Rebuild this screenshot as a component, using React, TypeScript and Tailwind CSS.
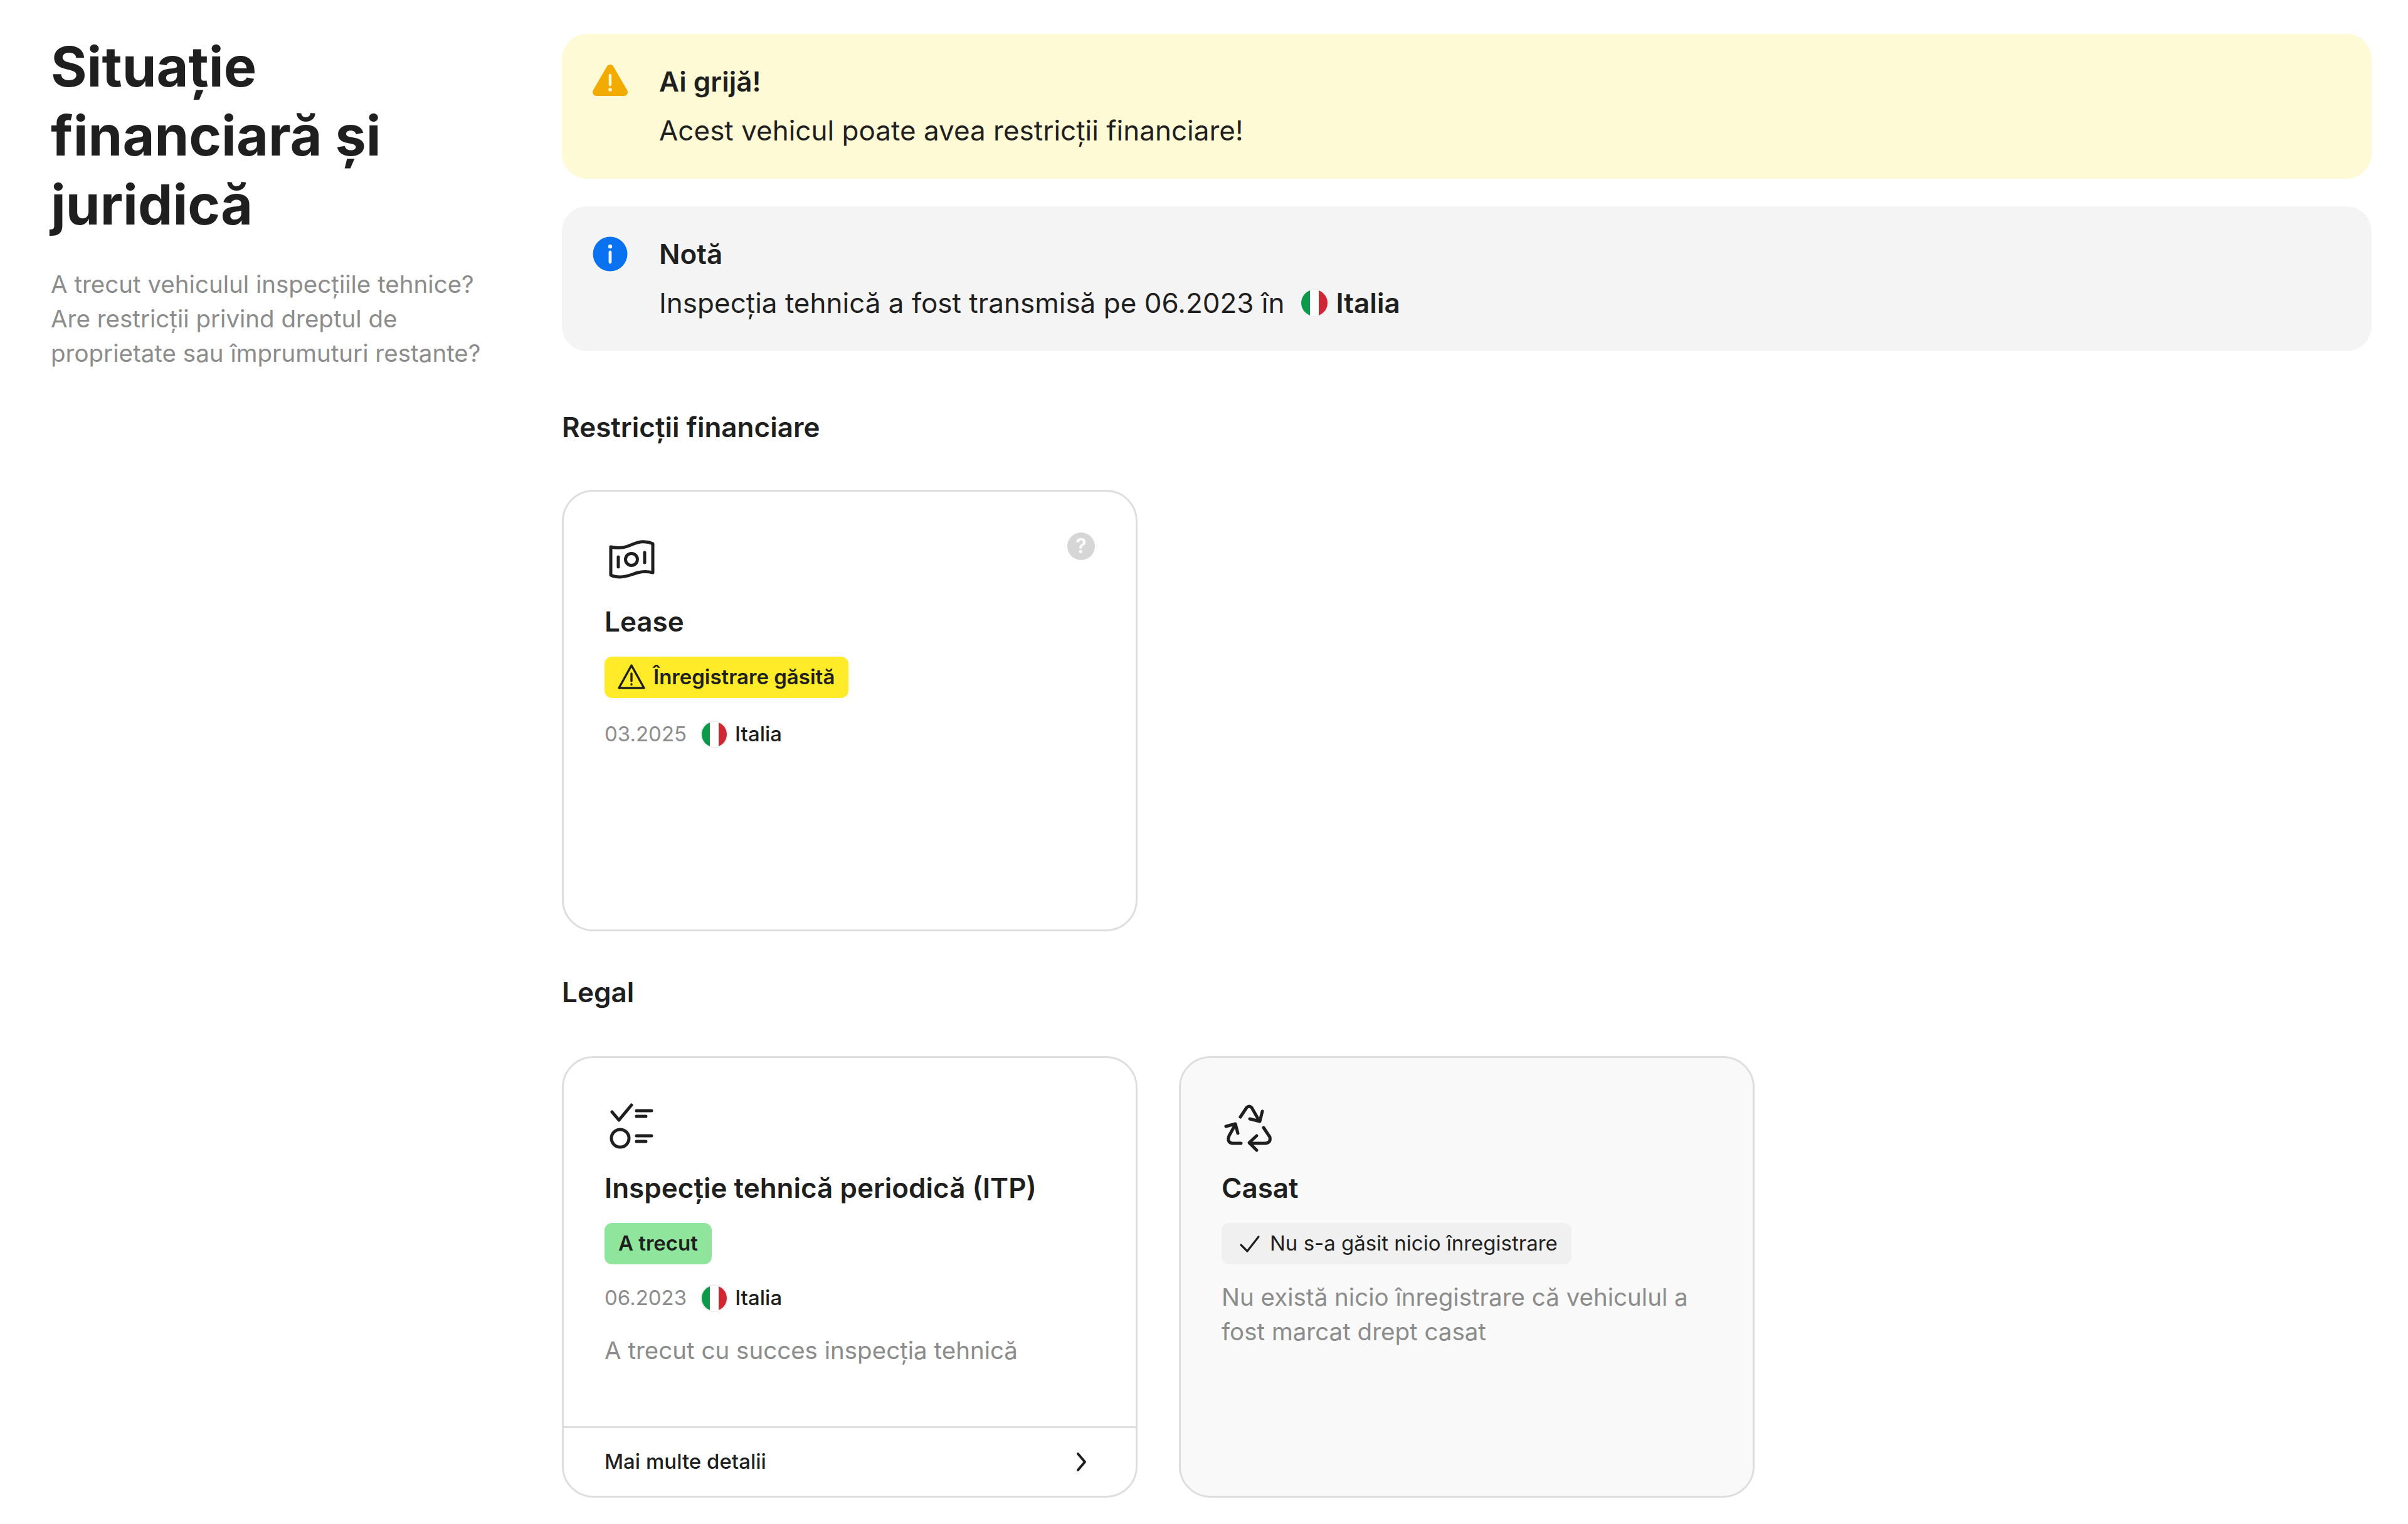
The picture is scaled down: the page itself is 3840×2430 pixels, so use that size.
const ink = "#1f1f1f";

function ItalyFlag({ size = "w-[44px] h-[44px]" }: { size?: string }) {
	return (
		<span className={`${size} rounded-full overflow-hidden flex shrink-0 border-[2px] border-[#efefef]`}>
			<span className="flex-1 bg-[#0b9a4a]" />
			<span className="flex-1 bg-white" />
			<span className="flex-1 bg-[#cf2535]" />
		</span>
	);
}

function WarnSolid() {
	return (
		<svg width="60" height="60" viewBox="0 0 60 60" className="block">
			<path d="M30 9 L52 47 H8 Z" fill="#f2ab00" stroke="#f2ab00" strokeWidth="12" strokeLinejoin="round" />
			<path d="M30 20 V35" stroke="#fffad6" strokeWidth="4.5" strokeLinecap="round" />
			<circle cx="30" cy="43" r="2.8" fill="#fffad6" />
		</svg>
	);
}

function InfoSolid() {
	return (
		<svg width="60" height="60" viewBox="0 0 60 60" className="block">
			<circle cx="30" cy="30" r="27.5" fill="#0a72f0" />
			<circle cx="30" cy="18" r="3.2" fill="#f4f4f4" />
			<path d="M30 27 V43" stroke="#f4f4f4" strokeWidth="4.8" strokeLinecap="round" />
		</svg>
	);
}

function MoneyIcon() {
	return (
		<svg width="88" height="88" viewBox="0 0 88 88" fill="none" stroke={ink} strokeWidth="5" strokeLinecap="round" strokeLinejoin="round" className="block">
			<path d="M11 24 C20 26 30 26 38 23 C48 19 56 15 66 16 C70 16 74 17 78 19 V65 C70 63 62 63 54 65 C44 68 36 72 26 72 C20 72 15 71 11 69 Z" />
			<circle cx="44" cy="44" r="9.5" />
			<path d="M23 40 V56 M65 33 V49" />
		</svg>
	);
}

function ChecklistIcon() {
	return (
		<svg width="88" height="88" viewBox="0 0 88 88" fill="none" stroke={ink} strokeWidth="5" strokeLinecap="round" strokeLinejoin="round" className="block">
			<path d="M13 22 L24 35 L44 11" />
			<path d="M52 20 H76 M52 29 H67" />
			<circle cx="26" cy="64" r="14" />
			<path d="M52 60 H76 M52 69 H67" />
		</svg>
	);
}

function RecycleIcon() {
	return (
		<svg width="88" height="88" viewBox="0 0 88 88" fill="none" stroke={ink} strokeWidth="5" strokeLinecap="round" strokeLinejoin="round" className="block">
			<path d="M31 30 L41 15 Q45 11 49 15 L61 36" />
			<path d="M66 21 L62 37 L46 33" />
			<path d="M32 72 H18 Q9 70 13 60 L23 42" />
			<path d="M8 45 L23 41 L27 56" />
			<path d="M68 47 L78 62 Q80 71 71 72 H46" />
			<path d="M57 60 L45 71 L57 83" />
		</svg>
	);
}

function Alert({
	bg,
	icon,
	title,
	children,
}: {
	bg: string;
	icon: React.ReactNode;
	title: string;
	children: React.ReactNode;
}) {
	return (
		<div className={`${bg} rounded-[40px] h-[231px] pt-[46px] pl-[47px] flex gap-[48px]`}>
			<div className="w-[60px] h-[60px]">{icon}</div>
			<div className="flex flex-col gap-[18px]">
				<div className="text-[44px] leading-[60px] font-semibold text-[#1f1f1f]">{title}</div>
				<div className="text-[44px] leading-[60px] text-[#1f1f1f] flex items-center">{children}</div>
			</div>
		</div>
	);
}

function Card({
	muted,
	icon,
	title,
	help,
	children,
	footer,
}: {
	muted?: boolean;
	icon: React.ReactNode;
	title: string;
	help?: boolean;
	children: React.ReactNode;
	footer?: string;
}) {
	return (
		<div className={`relative h-[704px] rounded-[50px] border-[3px] border-[#dedede] flex flex-col overflow-hidden ${muted ? "bg-[#f9f9f9]" : "bg-white"}`}>
			<div className="flex-1 pt-[64px] px-[65px]">
				<div className="w-[88px] h-[88px] -ml-[1px]">{icon}</div>
				<div className="mt-[25px] text-[44px] leading-[60px] font-semibold text-[#1f1f1f]">{title}</div>
				{children}
			</div>
			{help && (
				<div className="absolute top-[65px] right-[65px] w-[44px] h-[44px] rounded-full bg-[#d6d6d6] flex items-center justify-center text-white text-[32px] font-semibold">
					?
				</div>
			)}
			{footer && (
				<div className="h-[111px] border-t-[3px] border-[#dedede] pl-[65px] pr-[70px] flex items-center justify-between text-[33px] font-medium text-[#1f1f1f]">
					<span>{footer}</span>
					<svg width="34" height="34" viewBox="0 0 34 34" fill="none" stroke="#1f1f1f" strokeWidth="4" strokeLinecap="round" strokeLinejoin="round">
						<path d="M12 4 L23 17 L12 30" />
					</svg>
				</div>
			)}
		</div>
	);
}

function Badge({ bg, weight, children }: { bg: string; weight: string; children: React.ReactNode }) {
	return (
		<div className={`mt-[26px] ${bg} ${weight} w-fit h-[66px] rounded-[12px] px-[22px] flex items-center gap-[12px] text-[33px] text-[#1f1f1f]`}>
			{children}
		</div>
	);
}

function OriginRow({ date, top }: { date: string; top: string }) {
	return (
		<div className={`${top} h-[60px] flex items-center text-[33px]`}>
			<span className="text-[#8c8c8c]">{date}</span>
			<span className="ml-[22px]">
				<ItalyFlag />
			</span>
			<span className="ml-[11px] font-medium text-[#1f1f1f]">Italia</span>
		</div>
	);
}

export default function App() {
	return (
		<div className="w-[3840px] h-[2430px] bg-white font-[family-name:Inter,sans-serif] flex">
			<aside className="w-[896px] shrink-0 pl-[81px] pt-[51px] pr-[100px]">
				<h1 className="text-[88px] leading-[110px] font-bold text-[#1f1f1f]">
					Situație
					<br />
					financiară și
					<br />
					juridică
				</h1>
				<p className="mt-[45px] text-[38.5px] leading-[55px] text-[#8c8c8c]">
					A trecut vehiculul inspecțiile tehnice?
					<br />
					Are restricții privind dreptul de
					<br />
					proprietate sau împrumuturi restante?
				</p>
			</aside>
			<main className="w-[2886px] pt-[54px]">
				<div className="flex flex-col gap-[44px]">
					<Alert bg="bg-[#fffad6]" icon={<WarnSolid />} title="Ai grijă!">
						Acest vehicul poate avea restricții financiare!
					</Alert>
					<Alert bg="bg-[#f4f4f4]" icon={<InfoSolid />} title="Notă">
						<span>Inspecția tehnică a fost transmisă pe 06.2023 în</span>
						<span className="ml-[24px]">
							<ItalyFlag size="w-[46px] h-[46px]" />
						</span>
						<span className="ml-[12px] font-semibold">Italia</span>
					</Alert>
				</div>

				<h2 className="mt-[91px] text-[44px] leading-[60px] font-semibold text-[#1f1f1f]">Restricții financiare</h2>
				<div className="mt-[70px] grid grid-cols-[918px_918px] gap-x-[66px]">
					<Card icon={<MoneyIcon />} title="Lease" help>
						<Badge bg="bg-[#ffeb28]" weight="font-semibold">
							<svg width="46" height="46" viewBox="0 0 46 46" fill="none" stroke="#1f1f1f" strokeWidth="3.4" strokeLinejoin="round" strokeLinecap="round" className="-ml-[2px]">
								<path d="M23 4 L43 40 H3 Z" />
								<path d="M23 17 V29 M23 34 V34.5" />
							</svg>
							Înregistrare găsită
						</Badge>
						<OriginRow date="03.2025" top="mt-[28px]" />
					</Card>
				</div>

				<h2 className="mt-[67px] text-[44px] leading-[60px] font-semibold text-[#1f1f1f]">Legal</h2>
				<div className="mt-[72px] grid grid-cols-[918px_918px] gap-x-[66px]">
					<Card icon={<ChecklistIcon />} title="Inspecție tehnică periodică (ITP)" footer="Mai multe detalii">
						<Badge bg="bg-[#8ee59b]" weight="font-semibold">
							A trecut
						</Badge>
						<OriginRow date="06.2023" top="mt-[24px]" />
						<p className="mt-[26px] text-[38.5px] leading-[55px] text-[#8c8c8c]">A trecut cu succes inspecția tehnică</p>
					</Card>
					<Card muted icon={<RecycleIcon />} title="Casat">
						<Badge bg="bg-[#f0f0f0]" weight="font-normal">
							<svg width="38" height="38" viewBox="0 0 38 38" fill="none" stroke="#1f1f1f" strokeWidth="3.2" strokeLinecap="round" strokeLinejoin="round" className="ml-[4px]">
								<path d="M5 21 L15 31 L33 8" />
							</svg>
							<span className="ml-[1px]">Nu s-a găsit nicio înregistrare</span>
						</Badge>
						<p className="mt-[25px] text-[38.5px] leading-[55px] text-[#8c8c8c]">
							Nu există nicio înregistrare că vehiculul a fost marcat drept casat
						</p>
					</Card>
				</div>
			</main>
		</div>
	);
}
